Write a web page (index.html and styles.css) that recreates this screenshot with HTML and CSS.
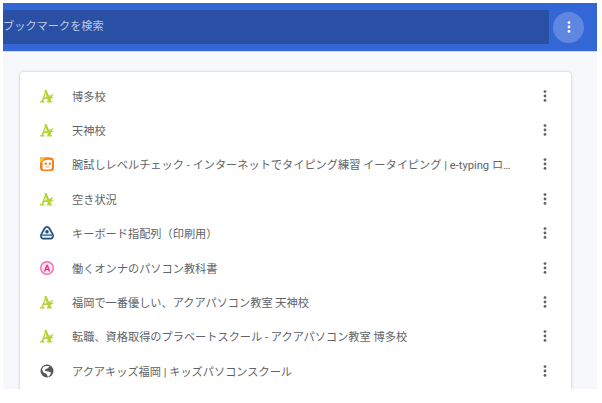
FILE: index.html
```html
<!DOCTYPE html>
<html lang="ja">
<head>
    <meta charset="UTF-8">
    <meta name="viewport" content="width=device-width, initial-scale=1.0">
    <title>ブックマーク</title>
    <link rel="stylesheet" href="styles.css">
</head>
<body>
    <svg class="defs" width="0" height="0">
        <symbol id="aqua" viewBox="0 0 16 16">
            <path fill="#b4d43c" d="M1 14.500h4.400v-1.200l-1.100-.3.700-2h3.200l.7 2-1 .3v1.200h5v-1.200l-1-.4L7.600 2H5.600l.2 2.500L2.400 13l-1.400.3zM5.400 9.300l1.200-3.600 1.200 3.600z"/>
            <path fill="#b4d43c" d="M9 6.500l2 1.300 3.800-2.300-2 3.200 2.200 1-2.800.5-.4 3-1.200-3.200-1.400-.6 1.300-.7z"/>
        </symbol>
        <symbol id="more" viewBox="0 0 4 14">
            <circle cx="2" cy="2.600" r="1.400"/>
            <circle cx="2" cy="7" r="1.400"/>
            <circle cx="2" cy="11.400" r="1.400"/>
        </symbol>
    </svg>

    <div class="page">
        <div class="toolbar">
            <div class="search">ブックマークを検索</div>
            <div class="menu-btn"><svg class="dots"><use href="#more"/></svg></div>
        </div>

        <div class="content">
            <div class="card">
                <div class="row">
                    <svg class="favicon"><use href="#aqua"/></svg>
                    <span class="title">博多校</span>
                    <svg class="dots"><use href="#more"/></svg>
                </div>
                <div class="row">
                    <svg class="favicon"><use href="#aqua"/></svg>
                    <span class="title">天神校</span>
                    <svg class="dots"><use href="#more"/></svg>
                </div>
                <div class="row">
                    <svg class="favicon" viewBox="0 0 16 16">
                        <path fill="#f7801e" d="M3 2.500C6 .8 11 .8 14 2l1 3v7c0 2-1 3-3 3H4c-2 0-3-1-3-3V5c0-1 1-2 2-2.500z"/>
                        <path fill="#fcc33c" d="M1 1h6L1 7z"/>
                        <path fill="#fff" d="M5.500 4.500c2-1 5-1 7.500-.3V11c0 1.500-.8 2.400-2.300 2.400H5c-1 0-1.500-.6-1.500-1.500V6.500c0-1 .8-1.600 2-2z"/>
                        <circle cx="6.800" cy="7.700" r="1.200" fill="#f7801e"/>
                        <circle cx="10.800" cy="7.700" r="1.200" fill="#f7801e"/>
                        <path fill="none" stroke="#f9a55f" stroke-width="1" d="M6.500 11h4"/>
                    </svg>
                    <span class="title">腕試しレベルチェック - インターネットでタイピング練習 イータイピング | e-typing ローマ字タイピング</span>
                    <svg class="dots"><use href="#more"/></svg>
                </div>
                <div class="row">
                    <svg class="favicon"><use href="#aqua"/></svg>
                    <span class="title">空き状況</span>
                    <svg class="dots"><use href="#more"/></svg>
                </div>
                <div class="row">
                    <svg class="favicon" viewBox="0 0 16 16">
                        <path fill="#1d4f7c" d="M8 1c1.500 0 2.500 1 3.500 2.500l3 5.500c1 2 .3 5-2.500 5.500H4c-2.800-.5-3.500-3.500-2.500-5.500l3-5.500C5.500 2 6.500 1 8 1z"/>
                        <path fill="#e8eef3" d="M8 2.800c.8 0 1.500.7 2 1.600l3 5c.7 1.500.3 3-1.300 3.300H4.300C2.700 12.400 2.300 11 3 9.400l3-5c.5-.9 1.200-1.600 2-1.600z"/>
                        <path fill="#1d4f7c" d="M3 9.500h10v1.200H3z"/>
                        <circle cx="8" cy="6.800" r="1.700" fill="#1d4f7c"/>
                    </svg>
                    <span class="title">キーボード指配列（印刷用）</span>
                    <svg class="dots"><use href="#more"/></svg>
                </div>
                <div class="row">
                    <svg class="favicon" viewBox="0 0 16 16">
                        <circle cx="8" cy="8" r="6.300" fill="#fde6f1" stroke="#f06fae" stroke-width="1.400"/>
                        <path fill="#e6308a" d="M4.800 11.500l2.600-6.800h1.500l2.300 6.800H9.700l-.5-1.600H7l-.6 1.600zM7.400 8.700h1.500l-.7-2.300z"/>
                    </svg>
                    <span class="title">働くオンナのパソコン教科書</span>
                    <svg class="dots"><use href="#more"/></svg>
                </div>
                <div class="row">
                    <svg class="favicon"><use href="#aqua"/></svg>
                    <span class="title">福岡で一番優しい、アクアパソコン教室 天神校</span>
                    <svg class="dots"><use href="#more"/></svg>
                </div>
                <div class="row">
                    <svg class="favicon"><use href="#aqua"/></svg>
                    <span class="title">転職、資格取得のプラベートスクール - アクアパソコン教室 博多校</span>
                    <svg class="dots"><use href="#more"/></svg>
                </div>
                <div class="row">
                    <svg class="favicon" viewBox="0 0 16 16">
                        <circle cx="8" cy="8" r="6.500" fill="#55585c"/>
                        <path fill="#fff" d="M4 4.200C6 2.800 8.500 2.800 10.500 3.500L8.500 5.500 6.500 6 6 8l3.500.5 2.500 1L11 12l-2 2-1.500-3-3-1.500L3 6.500z"/>
                    </svg>
                    <span class="title">アクアキッズ福岡 | キッズパソコンスクール</span>
                    <svg class="dots"><use href="#more"/></svg>
                </div>
            </div>
        </div>
    </div>
</body>
</html>
```

FILE: styles.css
```css
html, body {
    height: 100%;
}

body {
    margin: 0;
    background-color: #fff;
    overflow: hidden;
    font-family: "Roboto", "Noto Sans CJK JP", sans-serif;
}

.defs {
    display: block;
}

.page {
    height: 386px;
    margin: 3px 5px 0 3px;
    background-color: #f6f8fb;
    overflow: hidden;
}

.toolbar {
    height: 49px;
    box-sizing: border-box;
    padding: 7px 13px 7px 0;
    display: flex;
    align-items: center;
    background-color: #3367d6;
    border-bottom: 1px solid #d5dce8;
}

.search {
    width: 546px;
    height: 34px;
    line-height: 34px;
    font-size: 11.200px;
    color: #bcc9e6;
    background-color: #2a50a5;
    white-space: nowrap;
    flex-shrink: 0;
}

.menu-btn {
    width: 31px;
    height: 31px;
    margin-left: 4px;
    border-radius: 50%;
    background-color: #5f87e0;
    display: flex;
    align-items: center;
    justify-content: center;
}

.menu-btn .dots {
    fill: #fff;
}

.content {
    padding: 20px 26px 0 17px;
}

.card {
    background-color: #fff;
    border-radius: 4px 4px 0 0;
    box-shadow: 0 0 3px rgba(60, 64, 67, 0.3);
    padding-top: 6.500px;
    height: 400px;
}

.row {
    height: 34.400px;
    padding: 0 24px 0 19px;
    display: flex;
    align-items: center;
}

.favicon {
    width: 16px;
    height: 16px;
    flex-shrink: 0;
    margin-right: 17px;
}

.title {
    flex: 1;
    min-width: 0;
    max-width: 442px;
    font-size: 11.200px;
    color: #606367;
    white-space: nowrap;
    overflow: hidden;
    text-overflow: ellipsis;
}

.dots {
    width: 4px;
    height: 14px;
    flex-shrink: 0;
    fill: #5f6368;
}

.row .dots {
    margin-left: auto;
}
```
